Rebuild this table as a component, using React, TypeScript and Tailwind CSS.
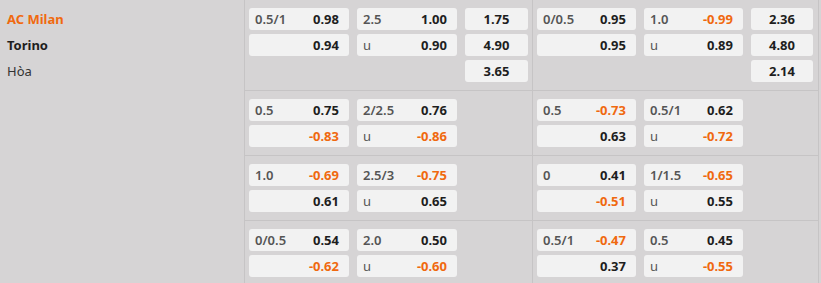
import React from "react";

type Pair = [string, string];

interface Block {
  hdp: [Pair, Pair];
  ou: [Pair, Pair];
  x12?: [string, string, string];
}

interface Line {
  ft: Block;
  ht: Block;
}

const lines: Line[] = [
  {
    ft: { hdp: [["0.5/1", "0.98"], ["", "0.94"]], ou: [["2.5", "1.00"], ["u", "0.90"]], x12: ["1.75", "4.90", "3.65"] },
    ht: { hdp: [["0/0.5", "0.95"], ["", "0.95"]], ou: [["1.0", "-0.99"], ["u", "0.89"]], x12: ["2.36", "4.80", "2.14"] },
  },
  {
    ft: { hdp: [["0.5", "0.75"], ["", "-0.83"]], ou: [["2/2.5", "0.76"], ["u", "-0.86"]] },
    ht: { hdp: [["0.5", "-0.73"], ["", "0.63"]], ou: [["0.5/1", "0.62"], ["u", "-0.72"]] },
  },
  {
    ft: { hdp: [["1.0", "-0.69"], ["", "0.61"]], ou: [["2.5/3", "-0.75"], ["u", "0.65"]] },
    ht: { hdp: [["0", "0.41"], ["", "-0.51"]], ou: [["1/1.5", "-0.65"], ["u", "0.55"]] },
  },
  {
    ft: { hdp: [["0/0.5", "0.54"], ["", "-0.62"]], ou: [["2.0", "0.50"], ["u", "-0.60"]] },
    ht: { hdp: [["0.5/1", "-0.47"], ["", "0.37"]], ou: [["0.5", "0.45"], ["u", "-0.55"]] },
  },
];

const oddColor = (v: string) => (v.startsWith("-") ? "text-[#f0690f]" : "text-[#1e1e1e]");

const OddBox = ({ label, value }: { label: string; value: string }) => (
  <div className="h-[22px] rounded-[3px] bg-[#f2f2f2] flex items-center justify-between pl-[6px] pr-[10px]">
    <span className={label === "u" ? "text-[#555]" : "font-semibold text-[#555]"}>{label}</span>
    <span className={"font-bold " + oddColor(value)}>{value}</span>
  </div>
);

const OneBox = ({ value }: { value: string }) => (
  <div className="h-[22px] rounded-[3px] bg-[#f2f2f2] flex items-center justify-center font-bold text-[#1e1e1e]">
    {value}
  </div>
);

const Cell = ({ b, last }: { b: Block; last?: boolean }) => (
  <div className={"px-1 py-2 " + (last ? "w-[286px] border-r border-[#c6c4c5]" : "w-[288px] border-r border-[#c6c4c5]")}>
    <div className={"grid gap-x-2 gap-y-1 " + (last ? "grid-cols-[99px_99px_62px]" : "grid-cols-[100px_100px_63px]")}>
      <OddBox label={b.hdp[0][0]} value={b.hdp[0][1]} />
      <OddBox label={b.ou[0][0]} value={b.ou[0][1]} />
      {b.x12 ? <OneBox value={b.x12[0]} /> : <div />}
      <OddBox label={b.hdp[1][0]} value={b.hdp[1][1]} />
      <OddBox label={b.ou[1][0]} value={b.ou[1][1]} />
      {b.x12 ? <OneBox value={b.x12[1]} /> : <div />}
      {b.x12 && (
        <>
          <div />
          <div />
          <OneBox value={b.x12[2]} />
        </>
      )}
    </div>
  </div>
);

export default function App() {
  return (
    <div className="w-[821px] h-[283px] overflow-hidden bg-[#d6d4d5] flex text-[13px] leading-none" style={{ fontFamily: '"Noto Sans", "Open Sans", sans-serif' }}>
      <div className="w-[245px] shrink-0 border-r border-[#c6c4c5] pt-2 pl-[7px] flex flex-col gap-1">
        <div className="h-[22px] flex items-center font-bold text-[#f0690f]">AC Milan</div>
        <div className="h-[22px] flex items-center font-bold text-[#1e1e1e]">Torino</div>
        <div className="h-[22px] flex items-center text-[#333]">Hòa</div>
      </div>
      <div className="flex flex-col">
        {lines.map((l, i) => (
          <div key={i} className="flex border-b border-[#c6c4c5]">
            <Cell b={l.ft} />
            <Cell b={l.ht} last />
          </div>
        ))}
      </div>
    </div>
  );
}
